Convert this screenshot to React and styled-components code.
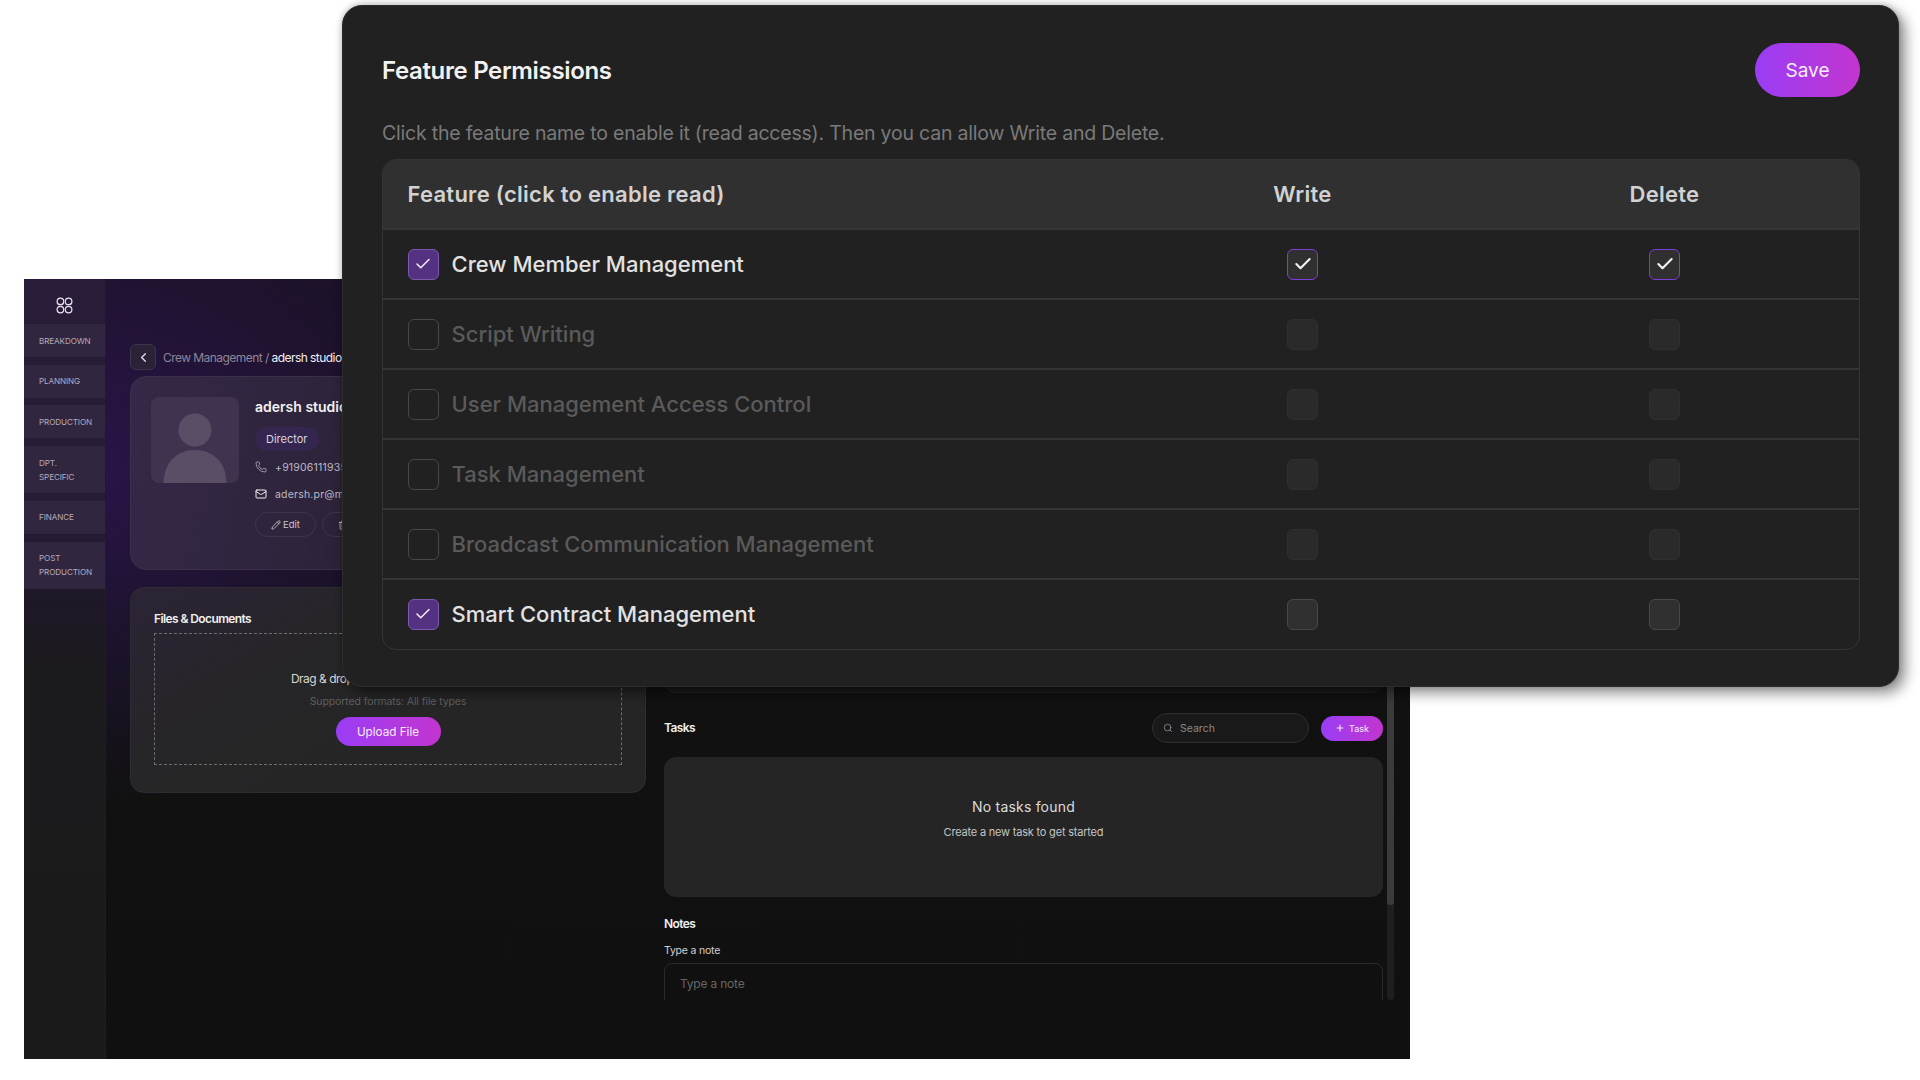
import React from "react";
import styled, { createGlobalStyle } from "styled-components";
import { Check, ChevronLeft, Mail, Pencil, Phone, Plus, Search, Trash2 } from "lucide-react";

const Global = createGlobalStyle`
  html, body { margin: 0; background: #fff; }
  body { font-family: Inter, "Noto Sans", sans-serif; }
  * { box-sizing: border-box; }
`;

const Page = styled.div`
  position: relative;
  width: 1920px;
  height: 1080px;
  overflow: hidden;
  background: #fff;
  padding: 279px 0 0 24px;
`;

const Shot = styled.div`
  width: 1386px;
  height: 780px;
  display: flex;
  overflow: hidden;
  background:
    radial-gradient(460px 340px at 60px 190px, rgba(60, 24, 116, 0.5), rgba(40, 20, 80, 0) 100%),
    linear-gradient(180deg, #18111f 0%, #15111b 30%, #111111 58%, #101010 100%);
`;

const Sidebar = styled.aside`
  width: 82px;
  flex: none;
  display: flex;
  flex-direction: column;
  gap: 7.7px;
  border-right: 1px solid #1f1d26;
  background: linear-gradient(180deg, #281c38 0%, #271c36 30%, #1f1828 40%, #1b1a1d 50%, #1a1a1a 100%);
`;

const Logo = styled.div`
  height: 37.4px;
  display: flex;
  align-items: center;
  justify-content: center;
  padding-top: 15px;
`;

const NavItem = styled.div`
  width: 81px;
  min-height: 33px;
  padding: 9.5px 12px 9.5px 15px;
  display: flex;
  align-items: center;
  background: #31263f;
  color: #b3abbb;
  font-size: 8.1px;
  line-height: 14px;
  letter-spacing: -0.1px;
  text-transform: uppercase;
`;

const Main = styled.main`
  flex: 1;
  display: flex;
  gap: 18px;
  padding: 65px 0 0 24px;
  min-width: 0;
`;

const LeftColumn = styled.section`
  width: 516px;
  flex: none;
  display: flex;
  flex-direction: column;
`;

const Crumbs = styled.div`
  height: 26px;
  display: flex;
  align-items: center;
  gap: 7px;
  margin-bottom: 6px;
  font-size: 12px;
  letter-spacing: -0.55px;
  color: #8d8798;
  white-space: nowrap;
`;

const BackButton = styled.div`
  width: 26px;
  height: 26px;
  display: flex;
  align-items: center;
  justify-content: center;
  border: 1px solid #3d3450;
  border-radius: 6px;
  background: #2b2238;
  color: #e6e3ea;
`;

const Current = styled.span`
  color: #f0f0f0;
`;

const ProfileCard = styled.div`
  height: 194px;
  display: flex;
  gap: 16px;
  padding: 20px;
  border: 1px solid #3a3048;
  border-radius: 16px;
  background: linear-gradient(100deg, #352848 0%, #2c2338 45%, #1f1a26 100%);
`;

const Avatar = styled.div`
  width: 88px;
  height: 86px;
  flex: none;
  display: flex;
  align-items: flex-end;
  justify-content: center;
  border-radius: 8px;
  background: #3f3350;
`;

const Info = styled.div`
  display: flex;
  flex-direction: column;
  align-items: flex-start;
  white-space: nowrap;
`;

const Name = styled.div`
  margin-top: -1px;
  font-size: 14px;
  font-weight: 600;
  line-height: 22px;
  color: #f2f2f2;
`;

const RoleTag = styled.div`
  margin-top: 9px;
  height: 24px;
  padding: 0 11px;
  display: flex;
  align-items: center;
  border-radius: 12px;
  background: #352650;
  color: #d9d5de;
  font-size: 11px;
`;

const Contact = styled.div`
  margin-top: ${(p) => p.$gap}px;
  height: 16px;
  display: flex;
  align-items: center;
  gap: 8px;
  font-size: 10.5px;
  letter-spacing: 0.2px;
  color: #bdb8c4;
  & svg { color: ${(p) => p.$iconColor}; }
`;

const Actions = styled.div`
  margin-top: 10px;
  display: flex;
  gap: 6px;
`;

const GhostButton = styled.div`
  height: 25px;
  padding: 0 15px;
  display: flex;
  align-items: center;
  gap: 2px;
  border: 1px solid #3e3548;
  border-radius: 13px;
  color: #c9c5ce;
  font-size: 9.5px;
`;

const FilesCard = styled.div`
  margin-top: 17px;
  height: 206px;
  padding: 23px 23px 0;
  border: 1px solid #2e2b33;
  border-radius: 14px;
  background: linear-gradient(150deg, #2c2436 0%, #262527 35%, #252525 100%);
`;

const SectionTitle = styled.div`
  font-size: 12px;
  font-weight: 600;
  line-height: 16px;
  letter-spacing: -0.6px;
  color: #f0f0f0;
`;

const DropZone = styled.div`
  margin-top: 6px;
  height: 132px;
  display: flex;
  flex-direction: column;
  align-items: center;
  justify-content: flex-end;
  padding-bottom: 18px;
  border: 1px dashed #6c6c6c;
`;

const DropText = styled.div`
  font-size: 12px;
  line-height: 16px;
  letter-spacing: -0.5px;
  color: #d6d6d6;
`;

const DropHint = styled.div`
  margin-top: 7px;
  font-size: 10.5px;
  line-height: 16px;
  letter-spacing: -0.1px;
  color: #5f5f5f;
`;

const GradientButton = styled.div`
  display: flex;
  align-items: center;
  justify-content: center;
  flex: none;
  gap: ${(p) => p.$gap || 0}px;
  width: ${(p) => p.$w}px;
  height: ${(p) => p.$h}px;
  margin-top: ${(p) => p.$top || 0}px;
  border-radius: ${(p) => p.$h / 2}px;
  background: linear-gradient(90deg, #9a3df5 0%, #c235cf 100%);
  color: #f6ecfb;
  font-size: ${(p) => p.$size}px;
  font-weight: 400;
`;

const RightColumn = styled.section`
  flex: 1;
  height: 656px;
  display: flex;
  gap: 4px;
  min-width: 0;
`;

const RightScroll = styled.div`
  width: 719px;
  flex: none;
  overflow: hidden;
`;

const TopCard = styled.div`
  height: 349px;
  border: 1px solid #24232a;
  border-radius: 12px;
  background: #191919;
`;

const TasksHead = styled.div`
  margin-top: 20px;
  height: 30px;
  display: flex;
  align-items: center;
  justify-content: space-between;
`;

const TasksTools = styled.div`
  display: flex;
  align-items: center;
  gap: 12px;
`;

const SearchBox = styled.div`
  width: 157px;
  height: 30px;
  padding: 0 10px;
  display: flex;
  align-items: center;
  gap: 7px;
  border: 1px solid #2f2f2f;
  border-radius: 15px;
  background: #191919;
  color: #8a8a8a;
  font-size: 10.5px;
`;

const EmptyCard = styled.div`
  margin-top: 14px;
  height: 140px;
  padding-top: 40px;
  border-radius: 12px;
  background: #252525;
  text-align: center;
`;

const EmptyTitle = styled.div`
  font-size: 14px;
  line-height: 20px;
  letter-spacing: 0.2px;
  color: #dcdcdc;
`;

const EmptyText = styled.div`
  margin-top: 7px;
  font-size: 11px;
  line-height: 16px;
  letter-spacing: -0.2px;
  color: #c4c4c4;
`;

const NotesTitle = styled(SectionTitle)`
  margin-top: 19px;
`;

const NoteLabel = styled.div`
  margin-top: 11px;
  font-size: 10.5px;
  line-height: 16px;
  letter-spacing: -0.2px;
  color: #d2d2d2;
`;

const NoteInput = styled.div`
  margin-top: 4px;
  height: 60px;
  padding: 10px 15px;
  border: 1px solid #2a2a2a;
  border-radius: 8px;
  font-size: 12px;
  line-height: 20px;
  letter-spacing: -0.2px;
  color: #666;
`;

const ScrollTrack = styled.div`
  width: 7px;
  height: 100%;
  border-radius: 4px;
  background: #1f1f1f;
`;

const ScrollThumb = styled.div`
  height: 561px;
  border-radius: 4px;
  background: #3b3b3b;
`;

const Modal = styled.div`
  position: absolute;
  left: 342px;
  top: 5px;
  width: 1557px;
  height: 682px;
  padding: 37px 38px 0 39px;
  border-radius: 20px;
  border: 1px solid #2c2c2c;
  background: #212121;
  box-shadow: 6px 6px 14px rgba(0, 0, 0, 0.45), 0 -1px 6px rgba(0, 0, 0, 0.2);
`;

const ModalHead = styled.div`
  display: flex;
  align-items: center;
  justify-content: space-between;
`;

const ModalTitle = styled.h2`
  margin: 0;
  font-size: 24px;
  font-weight: 600;
  letter-spacing: -0.35px;
  color: #f2f2f2;
`;

const ModalHint = styled.p`
  margin: 22px 0 0;
  font-size: 19.5px;
  line-height: 28px;
  letter-spacing: -0.21px;
  color: #7a7a7a;
`;

const Table = styled.div`
  margin-top: 12px;
  height: 491px;
  border: 1.5px solid #343434;
  border-radius: 14px;
  overflow: hidden;
`;

const Row = styled.div`
  height: 70px;
  display: grid;
  grid-template-columns: 1fr 362px 362px;
  align-items: center;
  padding: 0 13.5px 0 24.5px;
  background: ${(p) => (p.$head ? "#303030" : "transparent")};
  border-bottom: 2px solid #353535;
  &:last-child { border-bottom-color: transparent; }
`;

const HeadCell = styled.div`
  font-size: 22px;
  font-weight: 600;
  letter-spacing: 0.26px;
  color: #d2d2d2;
  text-align: ${(p) => (p.$center ? "center" : "left")};
`;

const Feature = styled.div`
  display: flex;
  align-items: center;
  gap: 13px;
  font-size: 22px;
  font-weight: 500;
  color: ${(p) => (p.$on ? "#e2e2e2" : "#5a5a5a")};
`;

const boxStyles = {
  readOn: "background:#543181;border:1.5px solid #7d57ad;color:#f4f0f8;",
  readOff: "background:transparent;border:1.5px solid #474747;",
  on: "background:#303030;border:1.5px solid #7a3fd6;color:#f4f4f4;",
  idle: "background:#303030;border:1.5px solid #474747;",
  off: "background:#2a2a2a;border:1.5px solid #2f2f2f;",
};

const Box = styled.div`
  width: 31px;
  height: 31px;
  flex: none;
  display: flex;
  align-items: center;
  justify-content: center;
  border-radius: 6px;
  ${(p) => boxStyles[p.$kind]}
`;

const BoxCell = styled.div`
  display: flex;
  justify-content: center;
`;

const navItems = ["Breakdown", "Planning", "Production", "Dpt. Specific", "Finance", "Post Production"];

const features = [
  { name: "Crew Member Management", read: true, write: "on", del: "on" },
  { name: "Script Writing", read: false, write: "off", del: "off" },
  { name: "User Management Access Control", read: false, write: "off", del: "off" },
  { name: "Task Management", read: false, write: "off", del: "off" },
  { name: "Broadcast Communication Management", read: false, write: "off", del: "off" },
  { name: "Smart Contract Management", read: true, write: "idle", del: "idle" },
];

const Tick = ({ kind, size }) =>
  kind === "readOn" || kind === "on" ? <Check size={size} strokeWidth={kind === "on" ? 2.5 : 2} /> : null;

const LogoMark = () => (
  <svg width="17" height="17" viewBox="0 0 17 17" fill="none" stroke="#e8e4ec" strokeWidth="1.2">
    <circle cx="4.4" cy="4.4" r="3.3" />
    <circle cx="12.6" cy="4.4" r="3.3" />
    <circle cx="4.4" cy="12.6" r="3.3" />
    <circle cx="12.6" cy="12.6" r="3.3" />
  </svg>
);

const AvatarFigure = () => (
  <svg width="64" height="70" viewBox="0 0 64 70" fill="#5a4d66">
    <circle cx="32" cy="17" r="16.5" />
    <path d="M0.5 70 C1 49 14 37 32 37 C50 37 63 49 63.5 70 Z" />
  </svg>
);

export default function App() {
  return (
    <Page>
      <Global />
      <Shot>
        <Sidebar>
          <Logo><LogoMark /></Logo>
          {navItems.map((item) => (
            <NavItem key={item}>{item}</NavItem>
          ))}
        </Sidebar>
        <Main>
          <LeftColumn>
            <Crumbs>
              <BackButton><ChevronLeft size={15} /></BackButton>
              <span>Crew Management / <Current>adersh studios</Current></span>
            </Crumbs>
            <ProfileCard>
              <Avatar><AvatarFigure /></Avatar>
              <Info>
                <Name>adersh studios</Name>
                <RoleTag>Director</RoleTag>
                <Contact $gap={8} $iconColor="#b9b4bf">
                  <Phone size={12} strokeWidth={1.5} />+919061119350
                </Contact>
                <Contact $gap={11} $iconColor="#f0f0f0">
                  <Mail size={12} strokeWidth={2} />adersh.pr@media.com
                </Contact>
                <Actions>
                  <GhostButton><Pencil size={10} />Edit</GhostButton>
                  <GhostButton><Trash2 size={10} />Delete</GhostButton>
                </Actions>
              </Info>
            </ProfileCard>
            <FilesCard>
              <SectionTitle>Files &amp; Documents</SectionTitle>
              <DropZone>
                <DropText>Drag &amp; drop your files here or browse</DropText>
                <DropHint>Supported formats: All file types</DropHint>
                <GradientButton $w={105} $h={29} $size={11.7} $top={7}>Upload File</GradientButton>
              </DropZone>
            </FilesCard>
          </LeftColumn>
          <RightColumn>
            <RightScroll>
              <TopCard />
              <TasksHead>
                <SectionTitle>Tasks</SectionTitle>
                <TasksTools>
                  <SearchBox><Search size={10} />Search</SearchBox>
                  <GradientButton $w={62} $h={25} $size={9} $gap={4}>
                    <Plus size={10} strokeWidth={2.5} />Task
                  </GradientButton>
                </TasksTools>
              </TasksHead>
              <EmptyCard>
                <EmptyTitle>No tasks found</EmptyTitle>
                <EmptyText>Create a new task to get started</EmptyText>
              </EmptyCard>
              <NotesTitle>Notes</NotesTitle>
              <NoteLabel>Type a note</NoteLabel>
              <NoteInput>Type a note</NoteInput>
            </RightScroll>
            <ScrollTrack><ScrollThumb /></ScrollTrack>
          </RightColumn>
        </Main>
      </Shot>
      <Modal>
        <ModalHead>
          <ModalTitle>Feature Permissions</ModalTitle>
          <GradientButton $w={105} $h={54} $size={19}>Save</GradientButton>
        </ModalHead>
        <ModalHint>Click the feature name to enable it (read access). Then you can allow Write and Delete.</ModalHint>
        <Table>
          <Row $head>
            <HeadCell>Feature (click to enable read)</HeadCell>
            <HeadCell $center>Write</HeadCell>
            <HeadCell $center>Delete</HeadCell>
          </Row>
          {features.map((f) => (
            <Row key={f.name}>
              <Feature $on={f.read}>
                <Box $kind={f.read ? "readOn" : "readOff"}>
                  <Tick kind={f.read ? "readOn" : "readOff"} size={18} />
                </Box>
                {f.name}
              </Feature>
              <BoxCell><Box $kind={f.write}><Tick kind={f.write} size={20} /></Box></BoxCell>
              <BoxCell><Box $kind={f.del}><Tick kind={f.del} size={20} /></Box></BoxCell>
            </Row>
          ))}
        </Table>
      </Modal>
    </Page>
  );
}
